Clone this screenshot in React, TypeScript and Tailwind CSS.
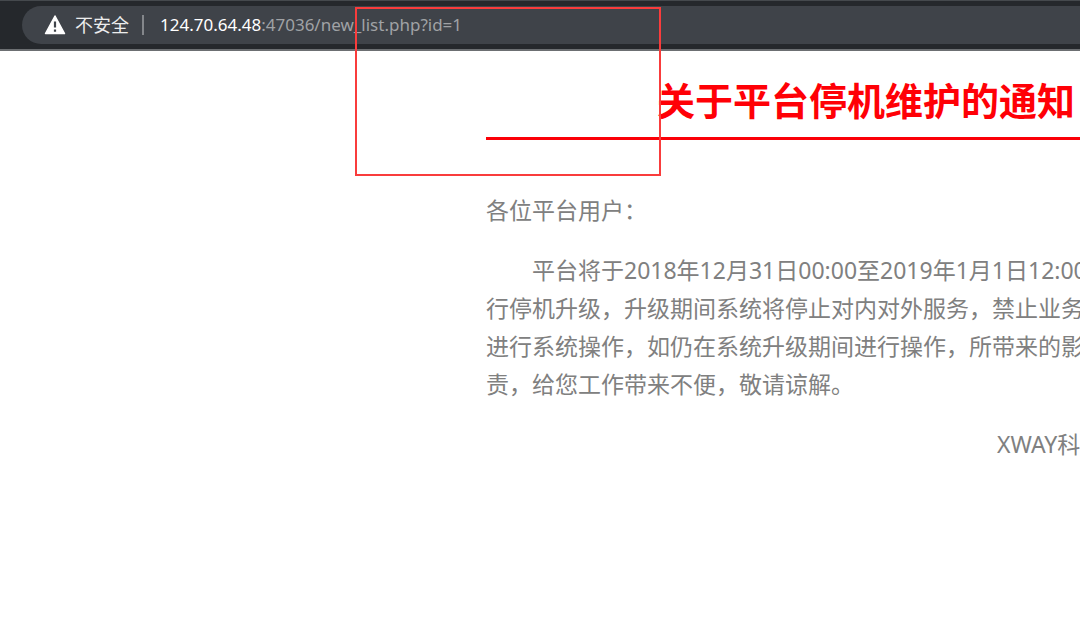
// Notice page shown inside a browser window
import React from 'react';

const bodyLines = [
  '行停机升级，升级期间系统将停止对内对外服务，禁止业务',
  '进行系统操作，如仍在系统升级期间进行操作，所带来的影',
  '责，给您工作带来不便，敬请谅解。'
];

const WarningIcon = () => (
  <svg width="22" height="20" viewBox="0 0 22 20" aria-hidden="true">
    <path d="M11 1 L20.5 18.5 H1.5 Z" fill="#fff" stroke="#fff" strokeWidth="1.5" strokeLinejoin="round" />
    <path d="M11 6.5 V12.5 M11 14.5 V16.7" stroke="#3f4349" strokeWidth="2.2" />
  </svg>
);

const AddressBar = () => (
  <header className="border-t border-b-2 border-t-[#45494d] border-b-[#6c6f72] bg-[#25282c] py-[5px] pl-[22px]">
    <div className="flex h-[38px] items-center rounded-l-full bg-[#3f4349] pl-[22px] whitespace-nowrap">
      <button type="button" className="flex items-center gap-[9px] text-lg text-[#eceded]">
        <WarningIcon />
        不安全
      </button>
      <div className="ml-[13px] h-5 w-[2px] bg-[#84878b]"></div>
      <div role="textbox" aria-label="地址" className="ml-4 text-[17px] text-[#a0a2a5]">
        <span className="text-white">124.70.64.48</span>:47036/new_list.php?id=1
      </div>
    </div>
  </header>
);

const Notice = () => (
  <article className="ml-[45%] text-[23px] leading-[38px] whitespace-nowrap text-[#808080]">
    <h1 className="border-b-[3px] border-[#fb0007] pt-[21px] pb-[9px] pl-[171px] text-[38px] leading-[56px] font-bold text-[#ff0006]">
      关于平台停机维护的通知
    </h1>
    <p className="mt-[51px]">各位平台用户：</p>
    <div className="mt-[22px]">
      <p className="indent-[2em]">平台将于2018年12月31日00:00至2019年1月1日12:00</p>
      {bodyLines.map(line => (
        <p key={line}>{line}</p>
      ))}
    </div>
    <p className="mt-[22px] pl-[511px]">XWAY科</p>
  </article>
);

const App = () => {
  return (
    <div
      lang="zh-CN"
      className="relative min-h-screen overflow-hidden bg-white font-['Noto_Sans','Noto_Sans_CJK_SC',sans-serif]"
    >
      <AddressBar />
      <main>
        <Notice />
      </main>
      {/* highlight frame */}
      <div className="pointer-events-none absolute top-[7px] left-[355px] h-[169px] w-[306px] border-2 border-[#f93c3c]"></div>
    </div>
  );
};

export default App;
